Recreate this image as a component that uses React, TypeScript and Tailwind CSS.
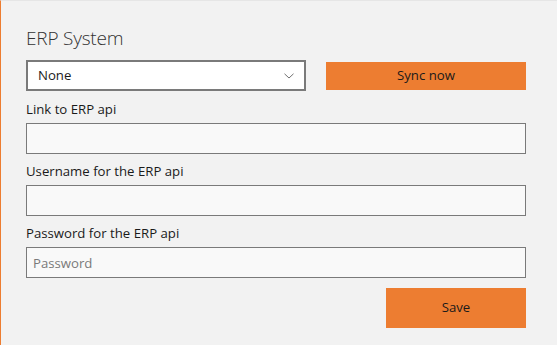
import React from "react";

function Field({ label, placeholder, type = "text" }: { label: string; placeholder?: string; type?: string }) {
  return (
    <div className="flex flex-col">
      <label className="text-[13.2px] leading-[19px] text-[#1a1a1a] mb-[4px] pt-[1px]">{label}</label>
      <input
        type={type}
        placeholder={placeholder}
        className="h-[31px] w-[500px] border border-[#7a7a7a] bg-[#f9f9f9] px-[6px] text-[13.2px] text-[#1a1a1a] placeholder:text-[#7a7a7a] outline-none"
      />
    </div>
  );
}

export default function App() {
  return (
    <div
      className="w-[557px] h-[345px] bg-[#f2f2f2] border-l-[1.5px] border-l-[#ed7d31] border-t border-t-[#e6e6e6] overflow-hidden"
      style={{ fontFamily: '"Open Sans", "Noto Sans", sans-serif' }}
    >
      <div className="pl-[25px] pt-[24px] flex flex-col">
        <h1 className="text-[19px] font-light text-[#333333] leading-[26px] tracking-[-0.2px]">ERP System</h1>
        <div className="flex items-center mt-[9px]">
          <div className="h-[31px] w-[280px] border-2 border-[#7a7a7a] bg-white flex items-center justify-between pl-[10px] pr-[10px]">
            <span className="text-[13.2px] text-[#1a1a1a]">None</span>
            <svg width="10" height="6" viewBox="0 0 10 6" fill="none">
              <path d="M0.5 0.8 L5 5 L9.5 0.8" stroke="#707070" strokeWidth="1" />
            </svg>
          </div>
          <button className="ml-[20px] h-[28px] w-[200px] bg-[#ed7d31] text-[13.2px] text-[#1a1a1a]">Sync now</button>
        </div>
        <div className="mt-[8px] flex flex-col gap-[7px]">
          <Field label="Link to ERP api" />
          <Field label="Username for the ERP api" />
          <Field label="Password for the ERP api" placeholder="Password" type="password" />
        </div>
        <div className="flex w-[500px] justify-end mt-[10px]">
          <button className="h-[40px] w-[140px] bg-[#ed7d31] text-[13.2px] text-[#1a1a1a]">Save</button>
        </div>
      </div>
    </div>
  );
}
